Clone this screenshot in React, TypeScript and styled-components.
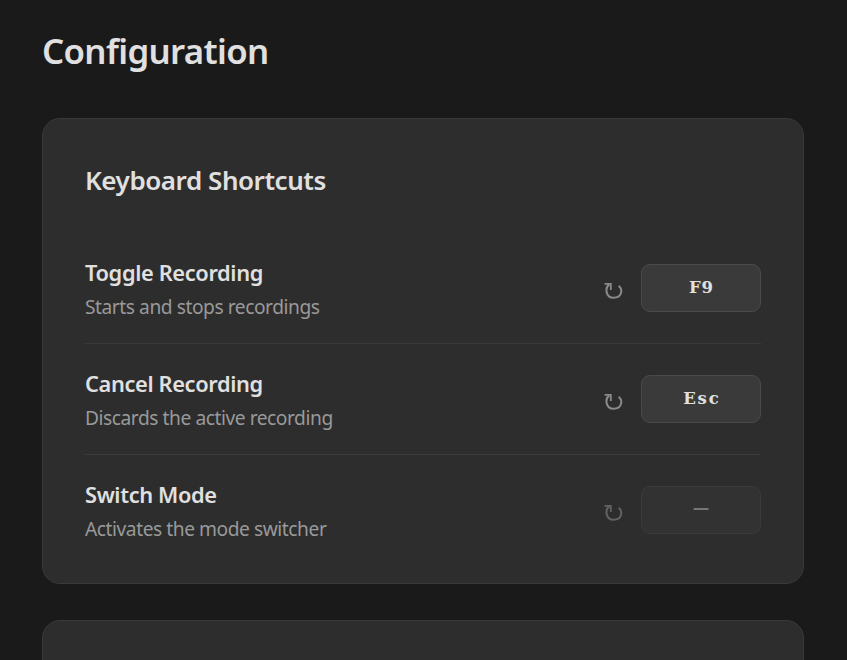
import React from 'react';
import styled, { createGlobalStyle } from 'styled-components';

const GlobalStyle = createGlobalStyle`
  * { box-sizing: border-box; }
  html, body { margin: 0; background: #1a1a1a; overflow: hidden; }
  body { font-family: 'Segoe UI', 'Noto Sans', 'Open Sans', sans-serif; color: #e0e0e0; }
`;

const Page = styled.main`
  height: 660px;
  overflow: hidden;
  padding: 27px 43px 0 42px;
`;

const Title = styled.h1`
  margin: 0 0 43px;
  font-size: 34.8px;
  line-height: 48px;
  font-weight: 600;
  letter-spacing: -0.65px;
  white-space: nowrap;
`;

const Card = styled.section`
  height: 466px;
  margin-bottom: 36px;
  padding: 42px;
  border: 1px solid #3a3a3a;
  border-radius: 18px;
  background: #2d2d2d;
`;

const CardTitle = styled.h2`
  margin: 0;
  padding-top: 1px;
  height: 72px;
  font-size: 26px;
  line-height: 36px;
  font-weight: 600;
  letter-spacing: -0.45px;
  white-space: nowrap;
`;

const Row = styled.div`
  display: flex;
  align-items: center;
  justify-content: space-between;
  height: 111px;
  border-bottom: 1px solid #3a3a3a;
  &:last-child { border-bottom-color: transparent; }
`;

const Label = styled.div`
  padding-top: 1px;
  height: 30px;
  font-size: 21.8px;
  line-height: 30px;
  font-weight: 600;
  letter-spacing: -0.36px;
  white-space: nowrap;
`;

const Description = styled.div`
  margin-top: 5px;
  padding-top: 1px;
  height: 27px;
  font-size: 19.2px;
  line-height: 27px;
  color: #999;
  letter-spacing: -0.45px;
  white-space: nowrap;
`;

const Controls = styled.div`
  display: flex;
  align-items: center;
  gap: 18px;
`;

const ResetButton = styled.button<{ $dim?: boolean }>`
  display: flex;
  width: 19px;
  height: 20px;
  margin-top: 5px;
  padding: 0;
  border: 0;
  background: none;
  color: ${(p) => (p.$dim ? '#636363' : '#8a8a8a')};
`;

const KeyButton = styled.button<{ $empty?: boolean; $spacing: number }>`
  width: 120px;
  height: 48px;
  padding: 0 0 ${(p) => (p.$empty ? 4 : 2)}px ${(p) => p.$spacing}px;
  border: 1px solid ${(p) => (p.$empty ? '#3a3a3a' : '#4a4a4a')};
  border-radius: 9px;
  background: ${(p) => (p.$empty ? '#323232' : '#3a3a3a')};
  color: ${(p) => (p.$empty ? '#777' : '#e0e0e0')};
  font: 700 16.5px 'DejaVu Serif', serif;
  letter-spacing: ${(p) => p.$spacing}px;
`;

const ResetIcon = () => (
  <svg width="19" height="20" viewBox="0 0 19 20" fill="none" stroke="currentColor">
    <path d="M5.2 3.6C1 6.4 1.2 16.7 9.7 16.7c7.9 0 9.6-8 5-12" strokeWidth="2" />
    <path d="M0.6 2.9h6.2v6.2" strokeWidth="1.8" />
  </svg>
);

const shortcuts = [
  { label: 'Toggle Recording', description: 'Starts and stops recordings', key: 'F9', tracking: 0.6 },
  { label: 'Cancel Recording', description: 'Discards the active recording', key: 'Esc', tracking: 1.8 },
  { label: 'Switch Mode', description: 'Activates the mode switcher', key: '', tracking: 0 },
];

export default function App() {
  return (
    <>
      <GlobalStyle />
      <Page>
        <Title>Configuration</Title>
        <Card>
          <CardTitle>Keyboard Shortcuts</CardTitle>
          {shortcuts.map((s) => (
            <Row key={s.label}>
              <div>
                <Label>{s.label}</Label>
                <Description>{s.description}</Description>
              </div>
              <Controls>
                <ResetButton $dim={!s.key} aria-label={`Reset ${s.label}`}>
                  <ResetIcon />
                </ResetButton>
                <KeyButton $empty={!s.key} $spacing={s.tracking}>{s.key || '—'}</KeyButton>
              </Controls>
            </Row>
          ))}
        </Card>
        <Card />
      </Page>
    </>
  );
}
